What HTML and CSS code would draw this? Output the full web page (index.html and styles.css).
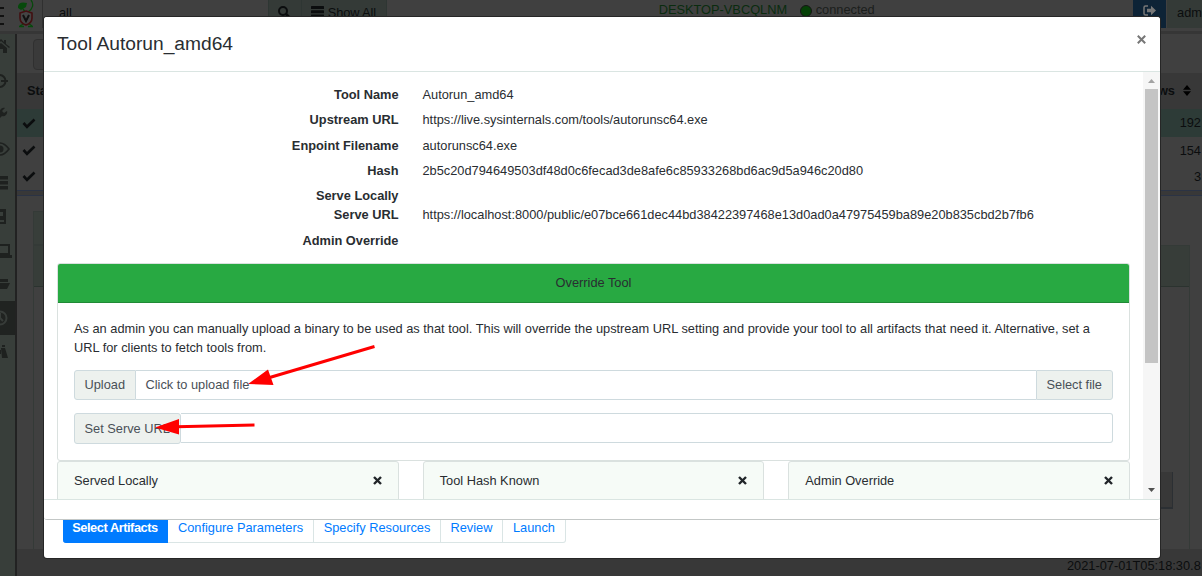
FILE: index.html
```html
<!DOCTYPE html>
<html lang="en">
<head>
<meta charset="utf-8">
<title>Tool Autorun_amd64</title>
<link rel="stylesheet" href="styles.css">
</head>
<body>
<div class="app">
  <header class="topbar">
    <div class="burger"><i></i><i></i><i></i></div>
    <svg class="logo" width="18" height="28" viewBox="0 0 18 28"><g fill="none" stroke="#07490c" stroke-width="1.3"><path d="M14 0c3 4 2 9-3 12M6 9l3 4M3 26l5-3M15 26l-4-3"/></g><path d="M1 6c1-4 5-4 9-3l-1 4-5 3-3-2z" fill="#07490c"/><path d="M2 26.500h5M11 26.500h5" stroke="#07490c" stroke-width="1.500"/><path d="M9 11l6 2v5c0 4-3 6-6 7-3-1-6-3-6-7v-5z" fill="#444" stroke="#420f11" stroke-width="1.6"/><path d="M6 15l3 6 3-6" fill="none" stroke="#111" stroke-width="2"/></svg>
    <div class="search">all</div>
    <div class="tbtn glass"><svg width="13" height="13" viewBox="0 0 13 13" fill="none" stroke="#0b0d0e" stroke-width="2"><circle cx="5" cy="5" r="4"/><path d="M8 8l4 4" stroke-width="2.5"/></svg></div>
    <div class="tbtn showall"><svg width="13" height="12" viewBox="0 0 13 12" fill="#0b0d0e"><rect width="13" height="3" rx=".5"/><rect y="4.3" width="13" height="3" rx=".5"/><rect y="8.6" width="13" height="3" rx=".5"/></svg><span>Show All</span></div>
    <div class="host"><span class="name">DESKTOP-VBCQLNM</span><i class="dot"></i><span>connected</span></div>
    <div class="logout"><svg width="13" height="11" viewBox="0 0 13 11"><path d="M5 1H2.500Q1 1 1 2.500v6Q1 10 2.500 10H5" fill="none" stroke="#777" stroke-width="1.500"/><path d="M4 3.700h4V.8l5 4.700-5 4.700V7.300H4z" fill="#777"/></svg></div>
    <div class="user">adm</div>
  </header>
  <div class="middle">
    <nav class="side">
      <div><svg class="far" width="20" height="16" viewBox="0 0 20 16"><path d="M0 8l9-8 3 3V1h2v4l4 3-1 1-8-7-8 7zM3 9l6-5 6 5v5h-4v-4H7v4H3z"/></svg></div>
      <div><svg width="18" height="16" viewBox="0 0 18 16"><path d="M8 0v6M8 10v6M1 8h5M10 8h7" stroke="#1e211f" stroke-width="2"/><circle cx="8.500" cy="8" r="6" fill="none" stroke="#1e211f" stroke-width="2"/></svg></div>
      <div><svg class="far" width="18" height="16" viewBox="0 0 18 16"><path d="M1 13l7-7c-1-3 2-6 5-5l-3 3 2 2 3-2c1 3-2 6-5 5l-7 7z"/></svg></div>
      <div><svg width="20" height="14" viewBox="0 0 20 14"><path d="M0 7q9-12 18 0-9 12-18 0z" fill="none" stroke="#1e211f" stroke-width="1.600"/><circle cx="9" cy="7" r="3.500"/></svg></div>
      <div><svg class="far" width="17" height="14" viewBox="0 0 17 14"><path d="M0 0h16v3.500H0zM0 5h16v3.500H0zM0 10h16v3.500H0z"/></svg></div>
      <div><svg class="far" width="16" height="16" viewBox="0 0 16 16"><path d="M0 0h14v15H0v-2h12v-2H0V7h11V3H0z"/></svg></div>
      <div><svg class="far" width="20" height="16" viewBox="0 0 20 16"><path d="M3 2h14v9H3z" fill="none" stroke="#1e211f" stroke-width="2"/><path d="M0 12h20v3H0z"/></svg></div>
      <div><svg width="19" height="14" viewBox="0 0 19 14"><path d="M0 1h6l2 2h9v3H4l-4 7zM5 7h14l-3 6H1z"/></svg></div>
      <div class="on"><svg width="18" height="18" viewBox="0 0 18 18" fill="none" stroke="#373c39" stroke-width="2"><circle cx="9" cy="9" r="6.500"/><path d="M9 4v5l3 3"/></svg></div>
      <div class="last"><svg width="18" height="16" viewBox="0 0 18 16"><path d="M2 3h5v10H0zM10 3h4l3 10h-6zM8 5h2v4H8zM3 0h3v2H3zM11 0h3v2h-3z"/></svg></div>
    </nav>
    <main class="main">
      <div class="tools"><span class="stub"></span></div>
      <div class="thead"><span>State</span><span class="r">Rows <svg width="8" height="11" viewBox="0 0 8 11"><path d="M0 4.700L4 0l4 4.700zM0 6.300h8L4 11z"/></svg></span></div>
      <div class="trow sel"><svg width="14" height="11" viewBox="0 0 14 11"><path d="M1.500 5l3.500 3.800L12.500 1.500"/></svg><span>192</span></div>
      <div class="trow"><svg width="14" height="11" viewBox="0 0 14 11"><path d="M1.500 5l3.500 3.800L12.500 1.500"/></svg><span>154</span></div>
      <div class="trow"><svg width="14" height="11" viewBox="0 0 14 11"><path d="M1.500 5l3.500 3.800L12.500 1.500"/></svg><span>3</span></div>
      <div class="split"></div>
      <div class="detail"><div class="tabs"></div><div class="pane"><div class="panehead"></div><div class="panebtn"></div></div></div>
    </main>
  </div>
  <footer class="foot"><span class="rail"></span><span class="clock">2021-07-01T05:18:30.8</span></footer>
</div>

<section class="wizard">
  <div class="steps"><span class="s1">Select Artifacts</span><span class="s2">Configure Parameters</span><span class="s3">Specify Resources</span><span class="s4">Review</span><span class="s5">Launch</span></div>
</section>

<section class="modal">
  <div class="mhead"><h1>Tool Autorun_amd64</h1><svg width="9" height="9" viewBox="0 0 9 9"><path d="M.8.8l7.400 7.400M8.200.8L.8 8.200" stroke="#777" stroke-width="2"/></svg></div>
  <div class="mbody">
    <div class="content">
      <dl>
        <dt>Tool Name</dt><dd><span>Autorun_amd64</span></dd>
        <dt>Upstream URL</dt><dd><span>https://live.sysinternals.com/tools/autorunsc64.exe</span></dd>
        <dt>Enpoint Filename</dt><dd><span>autorunsc64.exe</span></dd>
        <dt>Hash</dt><dd><span>2b5c20d794649503df48d0c6fecad3de8afe6c85933268bd6ac9d5a946c20d80</span></dd>
        <dt class="tight">Serve Locally</dt><dd class="tight"></dd>
        <dt>Serve URL</dt><dd><span>https://localhost:8000/public/e07bce661dec44bd38422397468e13d0ad0a47975459ba89e20b835cbd2b7fb6</span></dd>
        <dt>Admin Override</dt><dd></dd>
      </dl>
      <div class="card">
        <div class="cardhead">Override Tool</div>
        <div class="cardbody">
          <p>As an admin you can manually upload a binary to be used as that tool. This will override the upstream URL setting and provide your tool to all artifacts that need it. Alternative, set a<br>URL for clients to fetch tools from.</p>
          <div class="group"><span class="add up">Upload</span><span class="file">Click to upload file</span><span class="add pick">Select file</span></div>
          <div class="group url"><span class="add serve">Set Serve URL</span><span class="field"></span></div>
        </div>
      </div>
      <div class="status">
        <div><span>Served Locally</span><svg width="9" height="9" viewBox="0 0 9 9"><path d="M1 1l7 7M8 1L1 8"/></svg></div>
        <div><span>Tool Hash Known</span><svg width="9" height="9" viewBox="0 0 9 9"><path d="M1 1l7 7M8 1L1 8"/></svg></div>
        <div><span>Admin Override</span><svg width="9" height="9" viewBox="0 0 9 9"><path d="M1 1l7 7M8 1L1 8"/></svg></div>
      </div>
    </div>
    <div class="scroll"><svg width="7" height="4" viewBox="0 0 7 4"><path d="M0 4L3.500 0 7 4z" fill="#a3a3a3"/></svg><i></i><svg width="7" height="4" viewBox="0 0 7 4"><path d="M0 0h7L3.500 4z" fill="#505050"/></svg></div>
  </div>
</section>

<svg class="arrows" width="1202" height="576" viewBox="0 0 1202 576"><g stroke="#f00" stroke-width="3"><path d="M374.500 346.500L268 378M254.500 425l-78 1.700"/></g><path d="M248 384l20-14.500 5.500 15.500zM155 427.500l24-8.500v15.500z" fill="#f00"/></svg>
</body>
</html>
```
FILE: styles.css
```css
* { box-sizing: border-box; }
body { margin: 0; width: 1202px; height: 576px; overflow: hidden; position: relative; background: #404040; color: #292d31; font: 12.8px/19.2px "Liberation Sans", Arial, sans-serif; }
svg { flex: none; }
span { white-space: nowrap; }

.app { height: 576px; display: flex; flex-direction: column; color: #0b0d0e; }
.topbar { height: 34px; flex: none; display: flex; align-items: flex-start; border-bottom: 3px solid #363636; overflow: hidden; }
.burger { width: 17px; padding-top: 7px; display: grid; gap: 6px; }
.burger i { width: 4px; height: 2px; background: #111; }
.logo { margin-right: 7px; }
.search { width: 226px; height: 28px; border-left: 1px solid #303030; padding: 3px 0 0 16px; }
.tbtn { height: 28px; background: #343a37; border-left: 1px solid #2e3633; display: flex; gap: 4px; padding-top: 6px; }
.glass { width: 33px; padding-left: 9px; }
.showall { width: 86px; padding-left: 9px; border-right: 1px solid #2e3633; }
.showall span { margin-top: -3px; letter-spacing: -.1px; }
.host { width: 475px; margin-left: 272px; display: flex; color: #1b1e1c; }
.host .name { color: #0a2c0f; width: 141px; }
.host .dot { width: 12px; height: 12px; border-radius: 50%; margin: 5px 4px 0 0; background: #054006; border: 1px solid #151515; }
.logout { width: 33px; height: 28px; background: #0d2336; padding: 2px 0 0 10px; }
.user { margin-left: 1px; height: 28px; flex: 1; background: #343a37; padding: 3px 0 0 10px; }

.middle { flex: 1; display: flex; min-height: 0; }
.side { width: 17px; flex: none; background: #383e3a; border-right: 2px solid #222; overflow: hidden; fill: #1e211f; }
.side div { height: 33.9px; width: 15px; overflow: hidden; display: flex; align-items: center; }
.side div svg { margin-left: -9px; margin-top: -7px; }
.side div .far { margin-left: -8px; }
.side div.on { background: #202321; height: 34px; }
.side div.on svg { margin-top: -1px; }
.side div.last svg { margin-top: 2px; }
.side div:nth-child(8) { height: 30px; }
.main { flex: 1; min-width: 0; }
.tools { height: 39px; padding: 5px 16px; }
.stub { display: block; height: 31px; width: 60px; border: 1px solid #303030; border-radius: 4px; background: #3a3a3a; }
.thead { height: 36px; background: #383838; display: flex; justify-content: space-between; align-items: center; padding: 0 11px 0 10px; font-weight: bold; }
.thead .r { display: flex; align-items: center; gap: 8px; }
.trow { height: 26.300px; display: flex; justify-content: space-between; align-items: center; padding: 0 1px 0 5px; }
.trow svg { fill: none; stroke: #0b0d0e; stroke-width: 2.600; }
.trow.sel { background: #2d3b37; height: 28px; }
.split { height: 6px; background: #383838; border: solid #2b3344; border-width: 1px 0; }
.detail { margin: 15px 12px 0 16px; }
.tabs { height: 34px; width: 200px; background: #383e3a; border: 1px solid #343a37; }
.pane { height: 305px; border: 1px solid #343a37; border-bottom: 0; }
.panehead { height: 41px; background: #373d39; border-bottom: 1px solid #2b332f; }
.panebtn { width: 60px; height: 37px; margin: 185px 16px 0 auto; background: #383838; border: solid #2b2f33; border-width: 0 1px 2px 0; }
.foot { height: 27px; flex: none; display: flex; background: #383838; position: relative; }
.rail { width: 17px; background: #383e3a; border-right: 2px solid #222; }
.clock { margin-left: auto; width: 135px; padding-top: 7px; }

.wizard, .modal { position: absolute; left: 44px; top: 17px; width: 1116px; background: #fff; border-radius: 3px; }
.wizard { height: 541px; display: flex; align-items: flex-end; padding: 0 19px 15px; box-shadow: 0 0 0 1px #262626; }
.steps { display: flex; height: 32px; color: #007bff; line-height: 32px; text-align: center; }
.steps span { border: 1px solid #dae5e5; border-left: 0; }
.steps .s1 { width: 105px; background: #007bff; border-color: #007bff; color: #fff; font-weight: bold; letter-spacing: -.45px; border-radius: 0 0 0 3px; }
.s2 { width: 146px; } .s3 { width: 127px; } .s4 { width: 62px; } .s5 { width: 63px; border-radius: 0 0 3px 0; }
.modal { height: 503px; border-bottom: 1px solid #c3c7c6; }
.mhead { height: 55px; border-bottom: 1px solid #dae5e2; display: flex; justify-content: space-between; align-items: flex-start; padding: 13px 14px 0 13px; }
.mhead svg { margin-top: 5px; }
h1 { margin: 0; font-size: 19.200px; line-height: 27px; font-weight: normal; }
.mbody { height: 428px; display: flex; border-bottom: 1px solid #dae5e2; overflow: hidden; }
.content { width: 1099px; padding: 13px 13px 0; }
dl { margin: 0; display: grid; grid-template-columns: 341.500px 1fr; column-gap: 24px; }
dt { text-align: right; font-weight: bold; }
dt, dd { margin: 0; height: 25.300px; }
.tight { height: 19.200px; }
.card { margin-top: 7px; width: 1073px; border: 1px solid #dae1df; border-radius: 3px; height: 198px; }
.cardhead { height: 39px; background: #28a942; border-bottom: 1px solid #208a36; border-radius: 2px 2px 0 0; text-align: center; line-height: 38px; }
.cardbody { padding: 16px 16px 0; }
p { margin: 0 0 13px; white-space: nowrap; }
.group { height: 30px; display: flex; margin-bottom: 13px; color: #495057; line-height: 28px; }
.add { background: #edf1ee; border: 1px solid #cedade; padding: 0 9.500px; }
.up { width: 62px; border-radius: 3px 0 0 3px; }
.file { flex: 1; border: solid #cedade; border-width: 1px 0; padding-left: 9.500px; }
.pick { width: 77px; border-radius: 0 3px 3px 0; }
.serve { width: 107px; height: 31px; border-radius: 3px; line-height: 30px; }
.field { flex: 1; border: 1px solid #cedade; border-left: 0; border-radius: 0 3px 3px 0; }
.status { width: 1073px; display: grid; grid-template-columns: repeat(3, 1fr); gap: 24px; }
.status div { height: 60px; background: #f6fbf7; border: 1px solid #dae1df; border-radius: 3px 3px 0 0; display: flex; justify-content: space-between; padding: 9px 16px 0; }
.status svg { margin-top: 5px; stroke: #212529; stroke-width: 2.400; }
.scroll { width: 17px; background: #f6f6f6; display: flex; flex-direction: column; align-items: center; padding: 7px 0; }
.scroll i { width: 13px; height: 274px; background: #c4c4c4; margin: 6px 0 auto; }
.arrows { position: absolute; left: 0; top: 0; }
```
